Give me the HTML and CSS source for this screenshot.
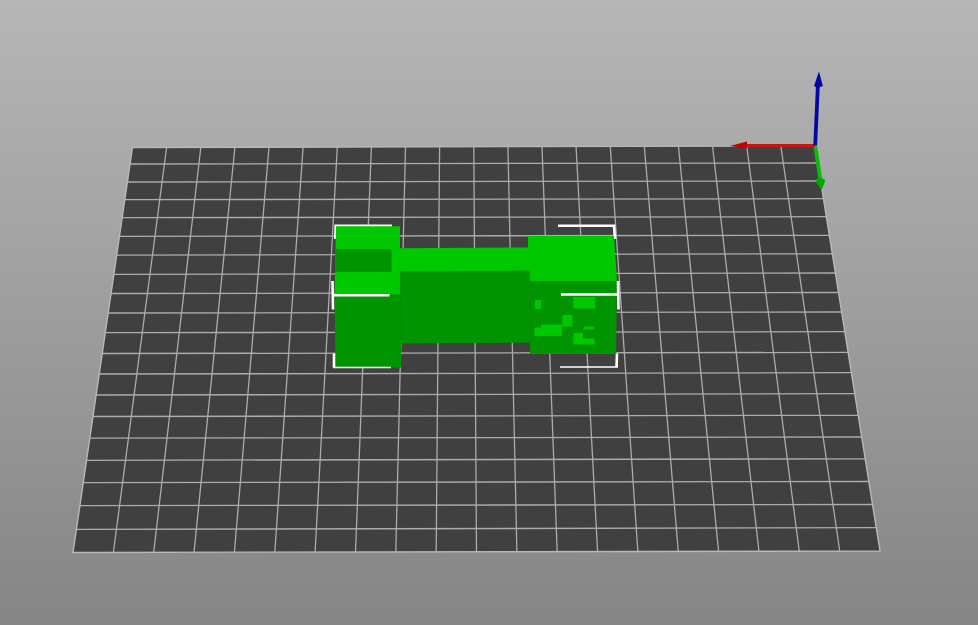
FILE: index.html
```
<!DOCTYPE html>
<html lang="en">
<head>
<meta charset="utf-8">
<title>3D build plate</title>
<link rel="stylesheet" href="styles.css">
</head>
<body>
<main class="viewport">
<svg class="scene" viewBox="0 0 978 625" preserveAspectRatio="xMidYMid slice" role="img" aria-label="Model on build plate">
  <polygon class="bed" points="132.5,147.5 815,146 880,551 73,552.5"/>
  <!-- grid columns -->
  <path class="grid" d="M166.6 147.5L113.4 552.5M200.8 147.5L153.7 552.5M234.9 147.5L194 552.5M269 147L234.4 552M303.1 147L274.8 552M337.3 147L315.1 552M371.4 147L355.5 552M405.5 147L395.8 552M439.6 147L436.2 552M473.8 147L476.5 552M507.9 147L516.9 552M542 147L557.2 552M576.1 147L597.6 552M610.3 147L637.9 552M644.4 147L678.3 551.5M678.5 146.5L718.6 551.5M712.6 146.5L759 551.5M746.8 146.5L799.3 551.5M780.9 146.5L839.7 551"/>
  <!-- grid rows -->
  <path class="grid" d="M130.1 164L817.7 163M127.4 182L820.6 181M124.9 199.7L823.4 198.7M122.2 217.7L826.3 216.7M119.5 236.3L829.3 235.3M116.7 255.2L832.3 253.8M113.9 274.3L835.4 273M111 293.5L838.5 292.5M108.2 313L841.6 312M105.3 332.7L844.8 331.7M102.2 353.5L848.1 352.4M99.2 374L851.4 372.7M96.1 395L854.7 393.7M93 416.5L858.2 415.3M89.8 438.2L861.7 437M86.6 460.3L865.2 458.8M83.3 482.6L868.8 481.5M79.9 505.6L872.5 504.5M76.4 529.4L876.2 527.7"/>
  <polygon class="bed-edge" points="132.5,147.5 815,146 880,551 73,552.5"/>

  <!-- bounding box, rear corners -->
  <path class="bounds" d="M335.300 239L335.700 225.800H392M558 225.700H614L615 239"/>

  <!-- model -->
  <path class="lit" d="M336 226.300H400V248.200L528 247.500V236H614L617 281V283H530V272H400V295H334.500Z"/>
  <path class="shade" d="M335.500 249H391.500V272H335Z"/>
  <path class="shade" d="M334.500 295L400 294.500V271.500L530 270.500V281H617L616 353.700H530V342.500L401 343.500V367.500H335.500Z"/>
  <path class="lit" d="M535 300H541V309H535ZM573.500 297H595V308.500H573.500ZM562.500 315H572.500V326.500H562V336H534.500V327.500H541V324.500H562.500ZM583.500 326.500H594V329.500H583.500ZM573.500 333H583V338.500H594.500V344.500H573.500Z"/>
  <path class="seam" d="M400.500 295L401.500 343M530.500 281V342"/>

  <!-- bounding box, front corners -->
  <path class="bounds" d="M332.500 281L333 309.500M332.500 295.300H389.500M561 294.500H618.500M618 281L618.500 309.500"/>
  <path class="bounds" d="M334 353.500V367.500"/>
  <path class="bounds" d="M617 353.500L616.500 367"/>
  <path class="bounds thin" d="M333 367.500H391M560 367H618"/>

  <!-- axes -->
  <path class="axis green" d="M815.300 146L820.300 179"/>
  <path class="green-tip" d="M816 179.500L819.500 177.500L825 179.500L824.500 183L821.800 189.500L820 188L816.500 182.500Z"/>
  <path class="axis red" d="M745 145.500H815"/>
  <path class="red-tip" d="M730 146L747 141.500V148.500Z"/>
  <path class="axis blue" d="M815.200 145.500L817.900 85"/>
  <path class="blue-tip" d="M819 71.500L822.800 86L819 87.500H816.500L814 86Z"/>
</svg>
</main>
</body>
</html>
```

FILE: styles.css
```
body {
  margin: 0;
}

.viewport {
  height: 100vh;
  overflow: hidden;
  background: linear-gradient(#b6b6b6, #858585);
}

.scene {
  display: block;
  width: 100%;
  height: 100%;
}

.bed {
  fill: #404040;
}

.grid {
  fill: none;
  stroke: #acacac;
  stroke-width: 1.3;
}

.bed-edge {
  fill: none;
  stroke: #b8b8b8;
  stroke-width: 1.4;
}

.lit {
  fill: #00c800;
}

.shade {
  fill: #009400;
}

.seam {
  fill: none;
  stroke: #008c00;
  stroke-width: 1;
}

.bounds {
  fill: none;
  stroke: #fff;
  stroke-width: 2.6;
}

.thin {
  stroke-width: 1.7;
}

.axis {
  fill: none;
  stroke-width: 3.8;
}

.red {
  stroke: #c81616;
  stroke-width: 3;
}

.red-tip {
  fill: #c40000;
}

.green {
  stroke: #0bbd0b;
}

.green-tip {
  fill: #00aa00;
}

.blue {
  stroke: #0707a5;
}

.blue-tip {
  fill: #0000a8;
}
```
